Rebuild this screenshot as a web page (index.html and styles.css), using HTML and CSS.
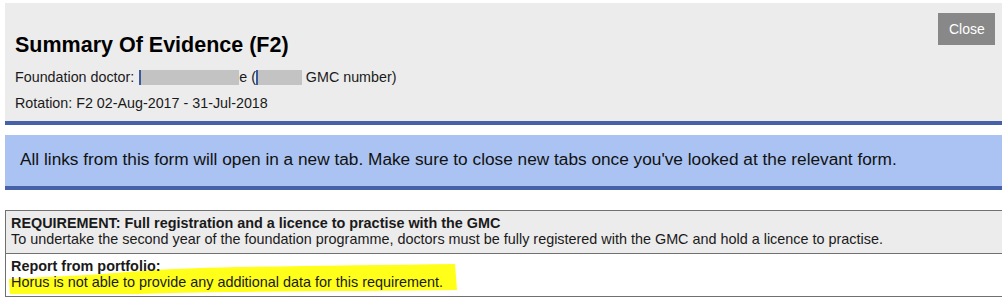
FILE: index.html
```html
<!DOCTYPE html>
<html lang="en">
<head>
  <meta charset="UTF-8" />
  <title>Summary Of Evidence (F2)</title>
  <link rel="stylesheet" href="styles.css">
</head>
<body>
  <div class="page">
    <!-- header -->
    <header class="soe-head">
      <div class="soe-info">
        <h1>Summary Of Evidence (F2)</h1>
        <p>Foundation doctor: <span class="redact r-name"></span>e (<span class="redact r-num"></span> GMC number)</p>
        <p>Rotation: F2 02-Aug-2017 - 31-Jul-2018</p>
      </div>
      <button class="close-btn">Close</button>
    </header>

    <!-- notice -->
    <div class="notice">All links from this form will open in a new tab. Make sure to close new tabs once you've looked at the relevant form.</div>

    <!-- requirement -->
    <table class="req">
      <tr class="req-title">
        <td>
          <b>REQUIREMENT: Full registration and a licence to practise with the GMC</b><br>
          To undertake the second year of the foundation programme, doctors must be fully registered with the GMC and hold a licence to practise.
        </td>
      </tr>
      <tr>
        <td class="report">
          <svg class="marker" width="460" height="40" viewBox="0 0 460 40" aria-hidden="true">
            <path d="M3 25 C30 23 80 22 120 18 C160 15 190 14 230 13 C300 12 380 11 449 10 L451 36 C380 37 300 37 220 38 C150 39 80 42 4 43 Z" fill="#ffff1a"/>
          </svg>
          <div class="report-text">
            <b>Report from portfolio:</b><br>
            Horus is not able to provide any additional data for this requirement.
          </div>
        </td>
      </tr>
    </table>
  </div>
</body>
</html>
```

FILE: styles.css
```css
/* reset */
*,*::before,*::after{box-sizing:border-box}
html,body{margin:0;padding:0;background:#fff}
body{
  font-family:"Liberation Sans",Arial,sans-serif;color:#1a1a1a;
  overflow:hidden;
}
.page{padding:3px 0 0 5px}

/* header */
.soe-head{
  display:flex;justify-content:space-between;align-items:flex-start;
  background:#ececec;border-bottom:4px solid #4661a8;
  padding:10px 7px 5px 10px;
}
.soe-info{margin-top:19px}
.soe-info h1{
  margin:0 0 6px;font-size:21.5px;line-height:26px;font-weight:bold;color:#000;
}
.soe-info p{margin:0;font-size:14.3px;line-height:26px}
.redact{
  display:inline-block;vertical-align:-3px;height:15px;background:#c3c3c3;
  border-left:2px solid #3b5a9a;
}
.r-name{width:100px;margin-left:1px}
.r-num{width:46px;margin-left:0}

.close-btn{
  border:none;background:#888;color:#fff;cursor:pointer;
  font-family:inherit;font-size:14px;line-height:16px;
  padding:8px 11px;height:32px;width:57px;
}

/* notice */
.notice{
  margin-top:10px;background:#aac3f2;border-bottom:4px solid #4661a8;
  padding:14px 15px 17px;font-size:17.25px;line-height:20px;color:#111;
}

/* requirement table */
.req{
  width:100%;margin-top:20px;border-collapse:collapse;
  font-size:14.4px;line-height:16px;
}
.req td{border:1px solid #707070;border-right:none;padding:4px 5px 6px}
.req-title td{background:#ececec}
.report{position:relative}
.marker{position:absolute;left:0;top:0;z-index:0}
.report-text{position:relative;z-index:1}
```
